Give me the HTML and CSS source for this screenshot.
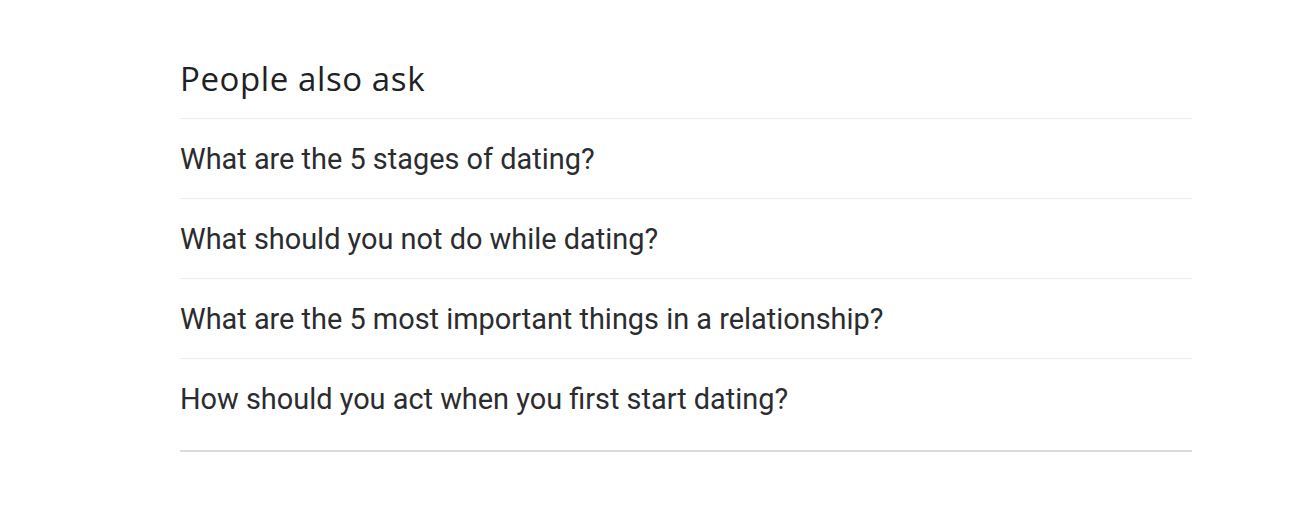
FILE: index.html
```html
<!DOCTYPE html>
<html lang="en">
<head>
    <meta charset="UTF-8">
    <title>People also ask</title>
    <link rel="stylesheet" href="styles.css">
</head>
<body>
    <div class="paa">
        <h2 class="paa-title">People also ask</h2>
        <div class="paa-list">
            <div class="paa-item">What are the 5 stages of dating?</div>
            <div class="paa-item">What should you not do while dating?</div>
            <div class="paa-item">What are the 5 most important things in a relationship?</div>
            <div class="paa-item">How should you act when you first start dating?</div>
        </div>
    </div>
</body>
</html>
```

FILE: styles.css
```css
body{
    margin: 0;
    background: #ffffff;
}

.paa{
    width: 1012px;
    margin-left: 180px;
    padding-top: 56px;
}

.paa-title{
    margin: 0;
    height: 62px;
    font-family: "Open Sans", sans-serif;
    font-weight: 400;
    font-size: 33px;
    letter-spacing: 0.6px;
    line-height: 46px;
    color: #202124;
}

.paa-list{
    padding-bottom: 12px;
    border-bottom: 2px solid #dcdcdc;
}

.paa-item{
    height: 80px;
    border-top: 1px solid #ececec;
    box-sizing: border-box;
    display: flex;
    align-items: center;
    font-family: Roboto, sans-serif;
    font-size: 28.9px;
    color: #2b2c30;
}
```
